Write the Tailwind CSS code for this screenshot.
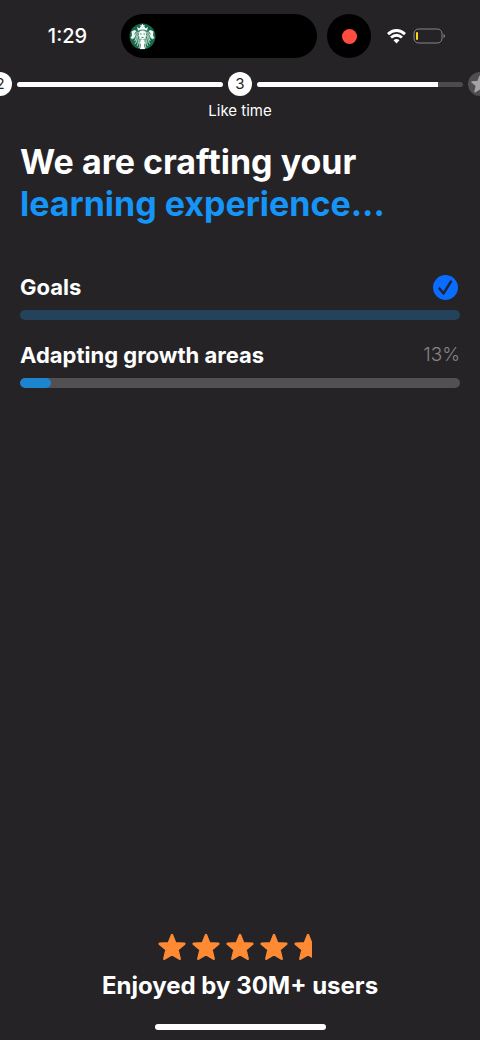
<!DOCTYPE html>
<html lang="en">
<head>
<meta charset="utf-8">
<meta name="viewport" content="width=device-width, initial-scale=1">
<title>Crafting your learning experience</title>
<script src="https://cdn.jsdelivr.net/npm/@tailwindcss/browser@4"></script>
</head>
<body class="bg-[#252326] text-white font-['Inter',sans-serif] min-h-screen flex flex-col overflow-x-hidden">
<svg class="hidden" aria-hidden="true">
  <symbol id="star" viewBox="0 0 28 28"><path d="M14 2 L17.300 10.300 L26.400 10.800 L19.500 16.600 L21.700 25.800 L14 21.200 L6.300 25.800 L8.500 16.600 L1.600 10.800 L10.700 10.300Z" fill="currentColor" stroke="currentColor" stroke-width="2.400" stroke-linejoin="round"/></symbol>
</svg>

<header class="flex items-center pt-[14px]">
  <div class="flex-[121] text-center text-[20px] leading-6 font-medium"><time class="block pl-[14px]">1:29</time></div>
  <div class="flex h-[44px] w-[196px] items-center rounded-full bg-black pl-2">
    <svg class="size-[27px]" viewBox="0 0 54 54" role="img" aria-label="Starbucks">
      <circle cx="27" cy="27" r="26" fill="#16694a"/>
      <circle cx="27" cy="28" r="17" fill="#3f8a6d"/>
      <g fill="none" stroke="#d3e5dc" stroke-width="1.7">
        <path d="M20 19c-7 5-4 12-9 17M17 18c-7 5-4 11-10 14M22 28c-4 6-2 12-6 18M19 24c-4 6-2 12-7 18"/>
        <path d="M34 19c7 5 4 12 9 17M37 18c7 5 4 11 10 14M32 28c4 6 2 12 6 18M35 24c4 6 2 12 7 18"/>
        <path d="M23 33c-3 5 0 11-3 17M31 33c3 5 0 11 3 17"/>
      </g>
      <path d="M20 20q0-5 7-5t7 5v6q-1 6-7 8-6-2-7-8z" fill="#f5faf7"/>
      <path d="M22 22h3M29 22h3M25 29h4" stroke="#16694a" stroke-width="1.6"/>
      <path d="M18 15l-2-7 5 3 2-4 4 3 4-3 2 4 5-3-2 7q-9-4-18 0zM27 1l1.6 3.4 3.6.4-2.6 2.5.7 3.7-3.3-1.8-3.3 1.8.7-3.7-2.6-2.5 3.6-.4z" fill="#fff"/>
      <path d="M24 34h6l2 6-2 3 2 9H22l2-9-2-3z" fill="#fff"/>
      <path d="M5 17l6-3 4 2-4 5 1 6-5 5-4-2 3-5zM49 17l-6-3-4 2 4 5-1 6 5 5 4-2-3-5z" fill="#f1f7f4"/>
    </svg>
  </div>
  <div class="ml-[10px] flex size-[44px] items-center justify-center rounded-full bg-black"><span class="size-[15px] rounded-full bg-[#ff4c40]"></span></div>
  <div class="flex flex-[109] items-center gap-[7px]">
    <svg class="ml-4 h-[15px] w-[19px]" viewBox="0 0 19 15" role="img" aria-label="Wi-Fi" fill="none" stroke="#fff" stroke-width="2.9">
      <path d="M1 5.2Q9.500-2.200 18 5.200"/><path d="M4 8.500Q9.500 3.800 15 8.500"/><path d="M6.500 11.200Q9.500 8.600 12.500 11.200L9.500 14.500Z" fill="#fff" stroke="none"/>
    </svg>
    <svg class="h-[16px] w-[33px]" viewBox="0 0 33 16" role="img" aria-label="Battery low">
      <rect x="1" y="1" width="28" height="14" rx="4.500" fill="none" stroke="#89878a"/>
      <rect x="3" y="4" width="2" height="8" rx="1" fill="#ffd51f"/>
      <path d="M30.500 6q1.500.5 1.500 2t-1.500 2z" fill="#89878a"/>
    </svg>
  </div>
</header>

<nav aria-label="Progress" class="mt-[14px]">
  <ol class="-mx-3 flex items-center gap-[5px] text-[15px] leading-6 text-[#252326]">
    <li class="size-6 shrink-0 rounded-full bg-white text-center">2</li>
    <li class="h-[5px] flex-1 rounded-full bg-white" aria-hidden="true"></li>
    <li class="size-6 shrink-0 rounded-full bg-white text-center" aria-current="step">3</li>
    <li class="h-[5px] flex-1 overflow-hidden rounded-full bg-[#4d4b4e]" aria-hidden="true"><div class="h-full bg-white" style="width:88%"></div></li>
    <li class="flex size-6 shrink-0 items-center justify-center rounded-full bg-[#504e51] text-[#a5a3a6]"><svg class="size-[18px]" role="img" aria-label="Finish"><use href="#star"/></svg></li>
  </ol>
  <p class="mt-[5px] text-center text-[15px] leading-5">Like time</p>
</nav>

<main class="flex flex-1 flex-col px-5 pt-5">
  <h1 class="text-[34px] leading-[42px] font-bold">We are crafting your<br><span class="text-[#1595f8]">learning experience...</span></h1>

  <section class="mt-12">
    <div class="flex h-7 items-center justify-between">
      <h2 id="goals" class="text-[22px] leading-7 font-bold">Goals</h2>
      <svg class="mr-[2px] size-[25px]" viewBox="0 0 25 25" role="img" aria-label="Complete"><circle cx="12.500" cy="12.500" r="12.500" fill="#0a6bff"/><path d="M6.500 13.500L10.500 18.500L18 6.500" fill="none" stroke="#1d2436" stroke-width="2.400" stroke-linecap="round" stroke-linejoin="round"/></svg>
    </div>
    <div role="progressbar" aria-labelledby="goals" aria-valuenow="100" class="mt-[9px] h-[10px] rounded-full bg-[#24435a]"></div>
  </section>

  <section class="mt-[21px]">
    <div class="flex h-7 items-center justify-between">
      <h2 id="growth" class="text-[22px] leading-7 font-bold">Adapting growth areas</h2>
      <span class="text-[19px] leading-7 font-light text-[#858386]">13%</span>
    </div>
    <div role="progressbar" aria-labelledby="growth" aria-valuenow="13" class="mt-[9px] h-[10px] overflow-hidden rounded-full bg-[#525053]"><div class="h-full rounded-full bg-[#1d84d0]" style="width:7%"></div></div>
  </section>
</main>

<footer class="flex flex-col items-center pb-[10px]">
  <div class="flex gap-[6px] text-[#ff8a34]" role="img" aria-label="4.5 out of 5 stars">
    <svg class="size-7"><use href="#star"/></svg>
    <svg class="size-7"><use href="#star"/></svg>
    <svg class="size-7"><use href="#star"/></svg>
    <svg class="size-7"><use href="#star"/></svg>
    <div class="w-7"><div class="w-[18px] overflow-hidden"><svg class="size-7"><use href="#star"/></svg></div></div>
  </div>
  <p class="mt-[9px] text-[24px] leading-8 font-bold">Enjoyed by 30M+ users</p>
  <div class="mt-[22px] h-[6px] w-[171px] rounded-full bg-white"></div>
</footer>
</body>
</html>
